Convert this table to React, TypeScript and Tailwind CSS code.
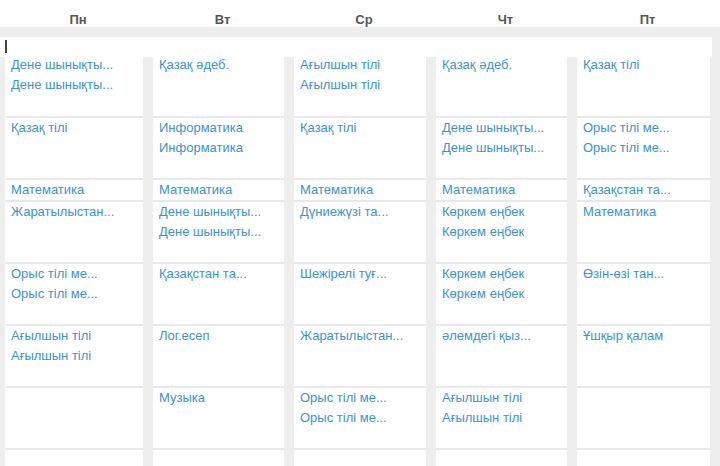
import React from 'react';

type Column = {
  day: string;
  rows: string[][];
};

const trim = (s: string) => (s.length > 12 ? s.slice(0, 12) + '...' : s);

const PE = 'Дене шынықтыру';
const KAZ = 'Қазақ тілі';
const ENG = 'Ағылшын тілі';
const RUS = 'Орыс тілі мен әдебиеті';
const MATH = 'Математика';
const HIST = 'Қазақстан тарихы';

const columns: Column[] = [
  {
    day: 'Пн',
    rows: [[PE, PE], [KAZ], [MATH], ['Жаратылыстану'], [RUS, RUS], [ENG, ENG], [], []],
  },
  {
    day: 'Вт',
    rows: [['Қазақ әдеб.'], ['Информатика', 'Информатика'], [MATH], [PE, PE], [HIST], ['Лог.есеп'], ['Музыка'], []],
  },
  {
    day: 'Ср',
    rows: [[ENG, ENG], [KAZ], [MATH], ['Дүниежүзі тарихы'], ['Шежірелі туған өлке'], ['Жаратылыстану'], [RUS, RUS], []],
  },
  {
    day: 'Чт',
    rows: [['Қазақ әдеб.'], [PE, PE], [MATH], ['Көркем еңбек', 'Көркем еңбек'], ['Көркем еңбек', 'Көркем еңбек'], ['әлемдегі қызықты'], [ENG, ENG], []],
  },
  {
    day: 'Пт',
    rows: [[KAZ], [RUS, RUS], [HIST], [MATH], ['Өзін-өзі тану'], ['Ұшқыр қалам'], [], []],
  },
];

const rowHeights = ['h-[61px]', 'h-[62px]', 'h-[22px]', 'h-[62px]', 'h-[62px]', 'h-[62px]', 'h-[62px]', 'h-[62px]'];

const gridCols = 'grid grid-cols-[138px_131px_132px_131px_133px] gap-x-[10px] pl-[5px]';

export default function App() {
  return (
    <div
      className="w-[720px] h-[466px] overflow-hidden bg-[#eeeeee]"
      style={{ fontFamily: '"Liberation Sans", Arial, sans-serif' }}
    >
      <div className={`${gridCols} h-[27px] bg-white`}>
        {columns.map((c) => (
          <div key={c.day} className="pl-2 pt-[12px] text-center text-[13px] font-bold leading-[15px] text-[#555555]">
            {c.day}
          </div>
        ))}
      </div>

      <div className="h-[10px]" />

      <div className="mr-[8px] h-[20px] bg-white pl-[5px] pt-[3px]">
        <div className="h-[13px] w-[2px] bg-[#444444]" />
      </div>

      <div className={gridCols}>
        {columns.map((c) => (
          <div key={c.day} className="flex flex-col bg-white">
            {c.rows.map((items, i) => (
              <div key={i} className={`${rowHeights[i]} border-b-2 border-[#e8e8e8] px-[6px]`}>
                <div className={i === 0 ? '-mt-[2px]' : ''}>
                  {items.map((s, j) => (
                    <div key={j} className="whitespace-nowrap text-[13px] leading-[20px] text-[#3a93cf]">
                      {trim(s)}
                    </div>
                  ))}
                </div>
              </div>
            ))}
          </div>
        ))}
      </div>
    </div>
  );
}
